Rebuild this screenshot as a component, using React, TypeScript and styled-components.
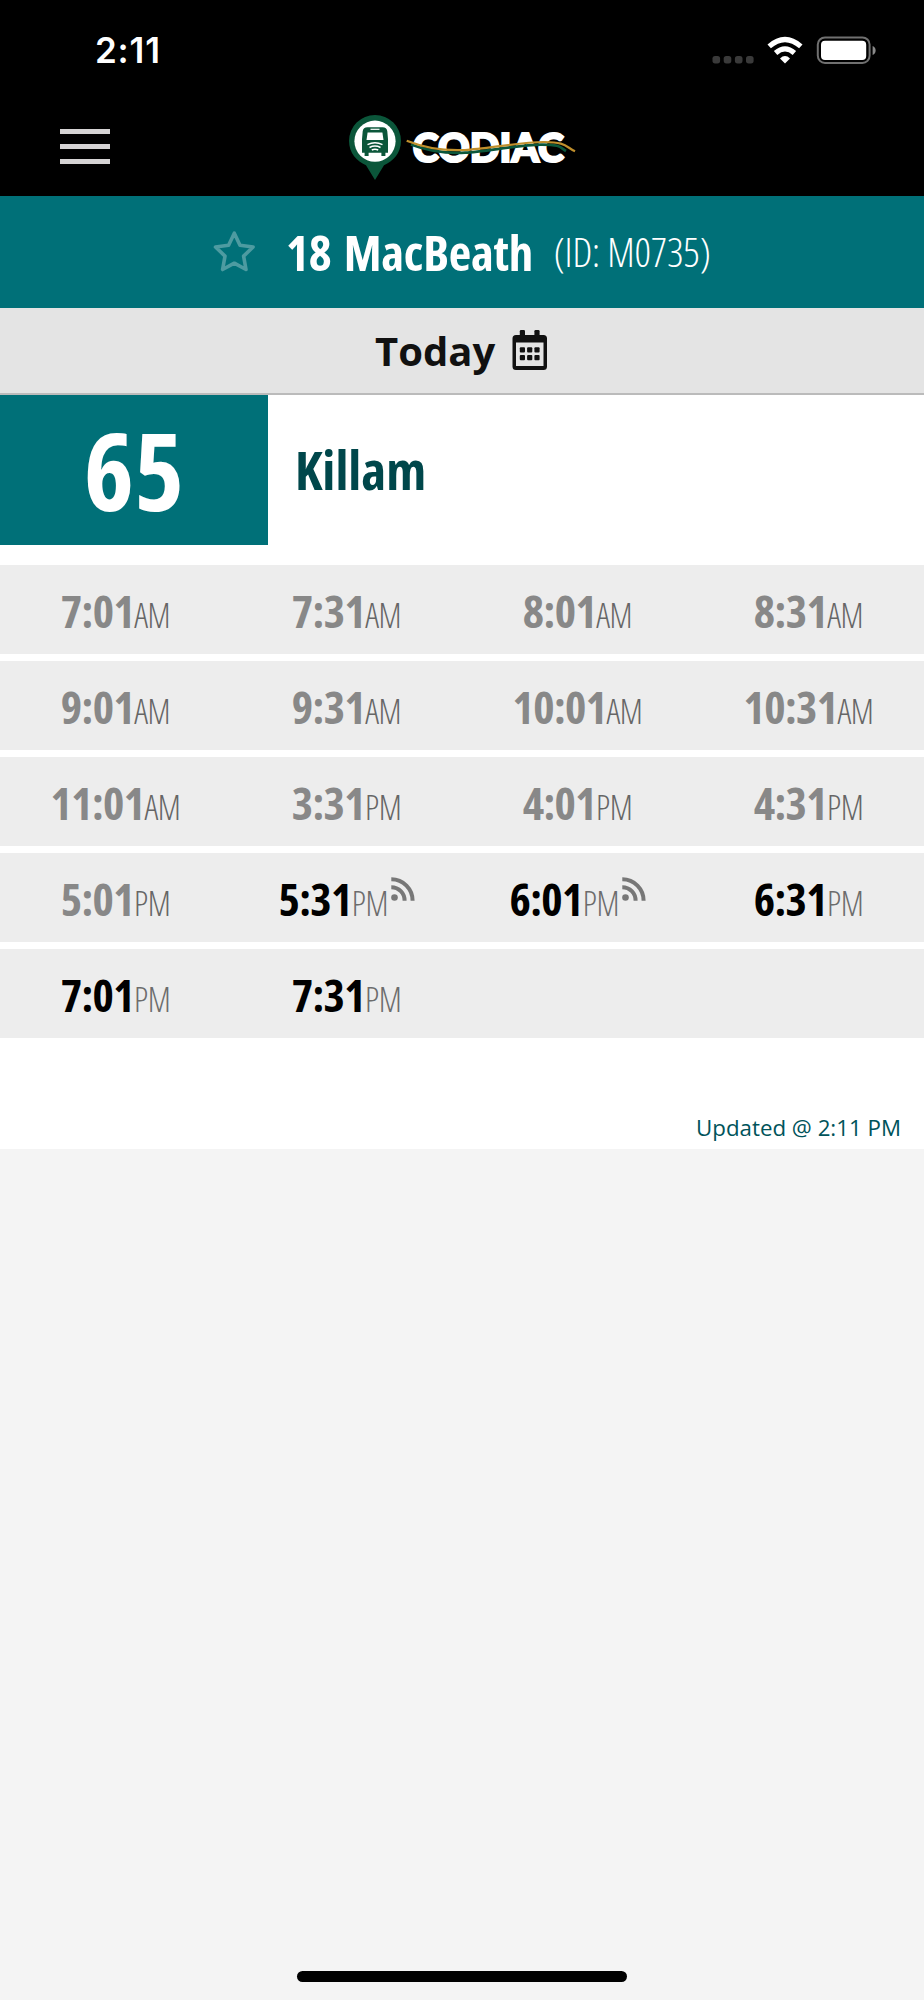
import React from "react";
import styled, { createGlobalStyle } from "styled-components";

const GlobalStyle = createGlobalStyle`
  * { box-sizing: border-box; }
  body { margin: 0; background: #f4f4f4; font-family: "Open Sans", "Noto Sans", sans-serif; }
`;

const Screen = styled.div`
  display: flex;
  flex-direction: column;
  width: 924px;
  height: 2000px;
  background: #f4f4f4;
  overflow: hidden;
`;

const Header = styled.header`
  flex: none;
  height: 196.4px;
  background: #000;
`;

const StatusBar = styled.div`
  display: flex;
  align-items: center;
  justify-content: space-between;
  height: 100px;
  padding: 0 48px 0 95px;
`;

const Clock = styled.span`
  color: #fff;
  font: 600 35px/40px Inter, sans-serif;
  letter-spacing: 0.8px;
`;

const NavBar = styled.div`
  display: grid;
  grid-template-columns: 348px auto 1fr;
  height: 96px;
`;

const MenuButton = styled.div`
  display: flex;
  flex-direction: column;
  gap: 9.6px;
  padding: 29px 0 0 59.5px;
`;

const MenuLine = styled.span`
  width: 50.6px;
  height: 5.4px;
  background: #d5d3d4;
`;

const LogoSlot = styled.div`
  padding-top: 12.5px;
`;

const StopBar = styled.div`
  flex: none;
  display: flex;
  align-items: center;
  height: 111.6px;
  padding-left: 213px;
  background: #007078;
  color: #fff;
`;

const StopName = styled.h1`
  margin: 0 0 0 31px;
  font-size: 49px;
  font-weight: 700;
  font-stretch: 75%;
  letter-spacing: -0.2px;
  word-spacing: 3.5px;
  line-height: 60px;
  white-space: pre;
`;

const StopId = styled.span`
  margin: 0 0 0 20.5px;
  font-size: 40.5px;
  font-weight: 300;
  font-stretch: 75%;
  letter-spacing: -0.2px;
  line-height: 60px;
  white-space: pre;
`;

const DayBar = styled.div`
  flex: none;
  display: flex;
  align-items: center;
  gap: 17px;
  height: 87px;
  padding-left: 375px;
  background: #e4e4e4;
  border-bottom: 2px solid #bbb;
  color: #111;
  font-size: 40px;
  font-weight: 700;
`;

const Panel = styled.main`
  flex: none;
  height: 754px;
  background: #fff;
`;

const Route = styled.div`
  display: flex;
  height: 149.6px;
`;

const RouteNumber = styled.div`
  width: 268px;
  background: #007078;
  color: #fff;
  font-size: 107px;
  font-weight: 700;
  font-stretch: 75%;
  line-height: 150px;
  text-align: center;
`;

const RouteName = styled.div`
  padding-left: 27px;
  color: #00474b;
  font-size: 53.5px;
  font-weight: 700;
  font-stretch: 75%;
  line-height: 149px;
`;

const Schedule = styled.div`
  display: flex;
  flex-direction: column;
  gap: 7px;
  margin-top: 20.4px;
`;

const ScheduleRow = styled.div`
  display: grid;
  grid-template-columns: repeat(4, 231px);
  height: 89px;
  background: #ededed;
`;

const Departure = styled.div<{ $past: boolean }>`
  display: flex;
  justify-content: center;
  align-items: baseline;
  color: ${(p) => (p.$past ? "#888" : "#000")};
  font-size: 45.5px;
  font-weight: 700;
  font-stretch: 75%;
  letter-spacing: -0.65px;
  line-height: 90px;
`;

const Meridiem = styled.span<{ $past: boolean }>`
  color: ${(p) => (p.$past ? "#666" : "#6c6c6c")};
  font-size: 34px;
  font-weight: 300;
  letter-spacing: -0.4px;
`;

const LiveIcon = styled.svg`
  align-self: flex-start;
  flex: none;
  width: 24px;
  height: 24px;
  margin: 24.5px 0 0 2.5px;
`;

const Updated = styled.div`
  margin: 75px 23px 0 0;
  color: #00535a;
  font-size: 22.3px;
  line-height: 30px;
  text-align: right;
`;

const HomeArea = styled.footer`
  display: flex;
  justify-content: center;
  margin-top: auto;
  padding-bottom: 18px;
`;

const HomeIndicator = styled.div`
  width: 330px;
  height: 11px;
  border-radius: 6px;
  background: #000;
`;

function StatusIcons() {
  return (
    <svg width="164" height="28" viewBox="712 36 164 28">
      <g fill="#3a3a3a">
        {[712.5, 723.7, 734.9, 746].map((x) => (
          <rect key={x} x={x} y="56" width="7.6" height="7.4" rx="2.6" />
        ))}
      </g>
      <g fill="none" stroke="#fff" strokeWidth="5.2">
        <path d="M769.2 46.4Q785 32.6 800.8 46.4" />
        <path d="M775.6 53Q785 44.8 794.4 53" />
      </g>
      <path d="M780 58.4Q785 53.6 790 58.4L785 63.6Z" fill="#fff" />
      <rect x="817.8" y="37.4" width="51.8" height="25.6" rx="7.2" fill="none" stroke="#707070" strokeWidth="2" />
      <rect x="821" y="40.8" width="45.2" height="19.2" rx="4" fill="#fff" />
      <path d="M872.6 46v9q3-1.2 3-4.5t-3-4.5Z" fill="#8a8a8a" />
    </svg>
  );
}

function Logo() {
  return (
    <svg width="230" height="68" viewBox="348 113 230 68">
      <path d="M375 115a26 26 0 0 0-26 26c0 12 8 20.500 17 24.200L375 180l9-14.800c9-3.700 17-12.200 17-24.200a26 26 0 0 0-26-26Z" fill="#0b563a" />
      <circle cx="375" cy="141.200" r="20.600" fill="#fff" />
      <path d="M367.500 127.200h15q4.300 0 4.800 4l.7 8v13.600h-2.600v3.200h-4v-3.200h-12.800v3.200h-4v-3.200H362v-13.600l.7-8q.5-4 4.800-4Z" fill="#0b563a" />
      <path d="M370.500 129.300h9" stroke="#fff" strokeWidth="1.200" />
      <path d="M367.600 132.400h14.800l1.100 7.500h-17Z" fill="#fff" />
      <g fill="none" stroke="#fff" strokeWidth="1.500">
        <path d="M367.500 144.600q7.500-3.600 15 0" />
        <path d="M369.500 147.500q5.500-2.800 11 0" />
        <path d="M371.800 150q3.200-1.600 6.400 0" />
      </g>
      <text x="412.800" y="162" fill="#fff" stroke="#fff" strokeWidth="2.200" fontFamily="Lato" fontWeight="900" fontSize="39.500" textLength="151" lengthAdjust="spacingAndGlyphs">CODIAC</text>
      <path d="M411 144.500C428 151 446 153.600 465 152.700S520 144.700 541 144.600S560 147.500 566 151" fill="none" stroke="#0b563a" strokeWidth="2.800" />
      <path d="M406.700 140.700C425 148 445 151 465 150S520 142.300 543 142S566 147 575 151.300" fill="none" stroke="#c08f2c" strokeWidth="2.200" />
    </svg>
  );
}

function StarIcon() {
  return (
    <svg width="42" height="42" viewBox="0 0 42 42">
      <path d="M21.300 2.200l5.700 12 13.100 1.800-9.500 9.100 2.400 13.400-11.700-6.300-11.700 6.300 2.400-13.400-9.500-9.100 13.100-1.800Z" fill="none" stroke="#4d9ba1" strokeWidth="3.600" strokeLinejoin="round" />
    </svg>
  );
}

function CalendarIcon() {
  return (
    <svg width="36" height="42" viewBox="0 0 36 42">
      <path d="M4 6h27.500q3.500 0 3.500 3.500v28q0 3.500-3.500 3.500H4Q.5 41 .5 37.500v-28Q.5 6 4 6ZM4 13.500v23.500h27.500V13.500Z" fill="#111" fillRule="evenodd" />
      <rect x="7.800" y="1" width="5.200" height="8" rx="1.200" fill="#111" />
      <rect x="22.400" y="1" width="5.200" height="8" rx="1.200" fill="#111" />
      {[18.3, 26.100].map((y) =>
        [7.800, 15.100, 22.400].map((x) => <rect key={`${x}-${y}`} x={x} y={y} width="5.200" height="5.200" rx="1" fill="#111" />)
      )}
    </svg>
  );
}

const Live = () => (
  <LiveIcon viewBox="0 0 24 24">
    <circle cx="3.500" cy="20.500" r="3.300" fill="#777" />
    <path d="M.3 10.200a13.300 13.300 0 0 1 13.300 13.600M.3 2.200A21.300 21.300 0 0 1 21.600 23.800" fill="none" stroke="#777" strokeWidth="4" />
  </LiveIcon>
);

type Time = { time: string; half: string; past?: boolean; live?: boolean };
const past = (time: string, half: string): Time => ({ time, half, past: true });

const rows: Time[][] = [
  [past("7:01", "AM"), past("7:31", "AM"), past("8:01", "AM"), past("8:31", "AM")],
  [past("9:01", "AM"), past("9:31", "AM"), past("10:01", "AM"), past("10:31", "AM")],
  [past("11:01", "AM"), past("3:31", "PM"), past("4:01", "PM"), past("4:31", "PM")],
  [past("5:01", "PM"), { time: "5:31", half: "PM", live: true }, { time: "6:01", half: "PM", live: true }, { time: "6:31", half: "PM" }],
  [{ time: "7:01", half: "PM" }, { time: "7:31", half: "PM" }],
];

export default function App() {
  return (
    <Screen>
      <GlobalStyle />
      <Header>
        <StatusBar>
          <Clock>2:11</Clock>
          <StatusIcons />
        </StatusBar>
        <NavBar>
          <MenuButton>
            <MenuLine />
            <MenuLine />
            <MenuLine />
          </MenuButton>
          <LogoSlot>
            <Logo />
          </LogoSlot>
        </NavBar>
      </Header>
      <StopBar>
        <StarIcon />
        <StopName>18 MacBeath</StopName>
        <StopId>(ID: M0735)</StopId>
      </StopBar>
      <DayBar>
        Today
        <CalendarIcon />
      </DayBar>
      <Panel>
        <Route>
          <RouteNumber>65</RouteNumber>
          <RouteName>Killam</RouteName>
        </Route>
        <Schedule>
          {rows.map((row, i) => (
            <ScheduleRow key={i}>
              {row.map((t) => (
                <Departure key={t.time} $past={!!t.past}>
                  {t.time}
                  <Meridiem $past={!!t.past}>{t.half}</Meridiem>
                  {t.live && <Live />}
                </Departure>
              ))}
            </ScheduleRow>
          ))}
        </Schedule>
        <Updated>Updated @ 2:11 PM</Updated>
      </Panel>
      <HomeArea>
        <HomeIndicator />
      </HomeArea>
    </Screen>
  );
}
